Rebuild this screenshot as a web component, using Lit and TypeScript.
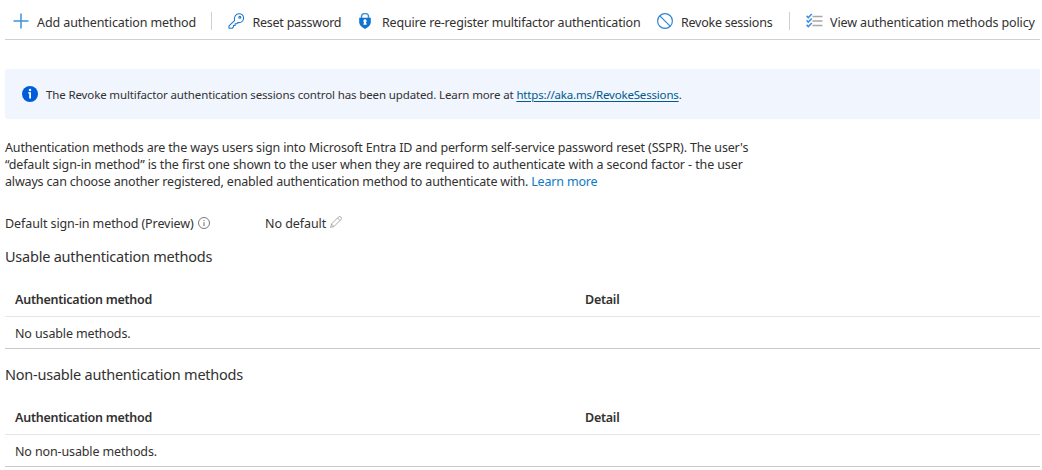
import { LitElement, html, css, svg } from "lit";
import { customElement, property } from "lit/decorators.js";

@customElement("method-table")
export class MethodTable extends LitElement {
  @property() heading = "";
  @property() empty = "";

  static styles = css`
    :host { display: block; height: 118px; }
    .heading { height: 35px; line-height: 22px; font-size: 14.5px; letter-spacing: -0.23px; font-weight: 400; margin: 0; }
    .row { display: grid; grid-template-columns: 570px 1fr; padding-left: 10px; box-sizing: border-box; }
    .head { height: 37px; line-height: 18px; padding-top: 11px; font-weight: 600; letter-spacing: -0.25px; border-bottom: 1px solid #e6e6e6; }
    .body { height: 32px; line-height: 33px; letter-spacing: -0.13px; border-bottom: 1px solid #c8c8c8; }
  `;

  render() {
    return html`
      <h2 class="heading">${this.heading}</h2>
      <div class="row head"><span>Authentication method</span><span>Detail</span></div>
      <div class="row body"><span>${this.empty}</span></div>
    `;
  }
}

@customElement("app-root")
export class AppRoot extends LitElement {
  static styles = css`
    :host {
      display: block; width: 1042px; height: 470px; overflow: hidden; box-sizing: border-box;
      padding: 0 2px 0 5px; background: #fff; color: #323130;
      font-family: "Noto Sans", "Open Sans", sans-serif; font-size: 12.5px; letter-spacing: -0.1px;
    }
    .bar { display: flex; align-items: center; height: 40px; padding-top: 3px; box-sizing: border-box; border-bottom: 1px solid #d2d0ce; white-space: nowrap; }
    .cmd { display: flex; align-items: center; flex: none; box-sizing: border-box; }
    .cmd svg { flex: none; }
    .cmd span { line-height: 18px; padding-top: 3px; }
    .add { width: 206px; padding-left: 8px; gap: 8px; }
    .reset { width: 130px; padding-left: 16px; gap: 8px; letter-spacing: -0.25px; }
    .require { width: 299px; padding-left: 15px; gap: 9px; letter-spacing: -0.19px; }
    .revoke { width: 148px; padding-left: 16px; gap: 8px; letter-spacing: -0.24px; }
    .view { padding-left: 16px; gap: 7px; letter-spacing: -0.12px; }
    .sep { width: 1px; height: 18px; background: #d2d0ce; flex: none; }
    .banner { display: flex; align-items: center; gap: 8px; height: 50px; margin: 29px 0 0; padding-left: 17px; box-sizing: border-box; background: #f0f5fe; border-radius: 3px 0 0 3px; font-size: 11.5px; letter-spacing: -0.13px; white-space: nowrap; }
    .banner span { padding-top: 1px; }
    .banner a { color: #005a8c; text-decoration: underline; text-underline-offset: 2px; letter-spacing: -0.18px; }
    .intro { margin: 20px 0 0; line-height: 17px; white-space: nowrap; }
    .line1 { letter-spacing: -0.155px; }
    .line2 { letter-spacing: -0.105px; }
    .line3 { letter-spacing: -0.175px; }
    .intro a { color: #0f78c4; }
    .default { display: flex; align-items: center; height: 20px; margin-top: 23px; margin-bottom: 12px; }
    .label { display: flex; align-items: center; gap: 4px; width: 260px; letter-spacing: -0.09px; }
    .value { display: flex; align-items: center; gap: 4px; letter-spacing: -0.06px; }
    .value svg { margin-bottom: 3px; }
  `;

  render() {
    return html`
      <div class="bar">
        <div class="cmd add">
          <svg width="16" height="16" viewBox="0 0 16 16"><path d="M8 .5v15M.5 8h15" stroke="#3d94dc" stroke-width="1.5" fill="none"/></svg>
          <span>Add authentication method</span>
        </div>
        <div class="sep"></div>
        <div class="cmd reset">
          <svg width="16.500" height="16" viewBox="0 0 17 17"><g fill="none" stroke="#1b7ad1" stroke-width="1.15" stroke-linejoin="round"><path d="M6.7 8.2C5.9 4 8 .8 11.4.8c2.8 0 4.9 2 4.9 4.7 0 3.1-2.7 5.2-6 4.6L8.900 11.500H7.300v1.700H5.500v1.700L4.200 16.200H.8v-2.600z"/><circle cx="12.300" cy="4.600" r="1.050"/></g></svg>
          <span>Reset password</span>
        </div>
        <div class="cmd require">
          <svg width="16" height="16" viewBox="0 0 16 16"><path d="M4.500 5V3.500a3.500 2.900 0 0 1 7 0V5" fill="none" stroke="#3c91df" stroke-width="1.500"/><path d="M2.200 4.700h11.600v4.600c0 2.800-2.300 5.200-5.800 6.600-3.500-1.400-5.800-3.800-5.800-6.600z" fill="#0f73d0"/><path d="M8 6.300a1.600 1.600 0 0 1 1 2.900l.7 2.500H6.300L7 9.200a1.600 1.600 0 0 1 1-2.900z" fill="#fff"/></svg>
          <span>Require re-register multifactor authentication</span>
        </div>
        <div class="cmd revoke">
          <svg width="16" height="16" viewBox="0 0 16 16"><g fill="none" stroke="#2b83d3" stroke-width="1.150"><circle cx="8" cy="8" r="7.400"/><path d="M2.800 2.800l10.400 10.400"/></g></svg>
          <span>Revoke sessions</span>
        </div>
        <div class="sep"></div>
        <div class="cmd view">
          <svg width="17" height="16" viewBox="0 0 17 16"><path d="M6.500 3.500H16.500M6.500 8H16.500M6.500 12.500H16.500" stroke="#aaa8a6" stroke-width="1.300"/>${[2.9, 7.4, 11.9].map(
            (y) => svg`<path d="M.6 ${y}l1.700 1.700 3.500-3.600" fill="none" stroke="#3d8fde" stroke-width="1.500"/>`
          )}</svg>
          <span>View authentication methods policy</span>
        </div>
      </div>
      <div class="banner">
        <svg width="16" height="16" viewBox="0 0 16 16"><circle cx="8" cy="8" r="8" fill="#015cda"/><circle cx="8" cy="4" r="1.250" fill="#fff"/><path d="M6.100 6.300H9v6.200H7.200V7.600H6.100z" fill="#fff"/></svg>
        <span>The Revoke multifactor authentication sessions control has been updated. Learn more at <a>https://aka.ms/RevokeSessions</a>.</span>
      </div>
      <p class="intro">
        <span class="line1">Authentication methods are the ways users sign into Microsoft Entra ID and perform self-service password reset (SSPR). The user's</span><br />
        <span class="line2">“default sign-in method” is the first one shown to the user when they are required to authenticate with a second factor - the user</span><br />
        <span class="line3">always can choose another registered, enabled authentication method to authenticate with. <a>Learn more</a></span>
      </p>
      <div class="default">
        <div class="label">
          <span>Default sign-in method (Preview)</span>
          <svg width="12" height="12" viewBox="0 0 12 12"><circle cx="6" cy="6" r="5.500" fill="none" stroke="#6b6967" stroke-width=".9"/><path d="M6 5.200v3.800M6 3v1.100" stroke="#6b6967" stroke-width="1"/></svg>
        </div>
        <div class="value">
          <span>No default</span>
          <svg width="12" height="12" viewBox="0 0 12 12"><path d="M.6 11.400l.9-3.400L8.400 1.100a1.500 1.500 0 0 1 2.500 2.500L4 10.500zM7.500 2l2.500 2.500M1.500 8L4 10.500" fill="none" stroke="#979593" stroke-width=".8"/></svg>
        </div>
      </div>
      <method-table heading="Usable authentication methods" empty="No usable methods."></method-table>
      <method-table heading="Non-usable authentication methods" empty="No non-usable methods."></method-table>
    `;
  }
}
